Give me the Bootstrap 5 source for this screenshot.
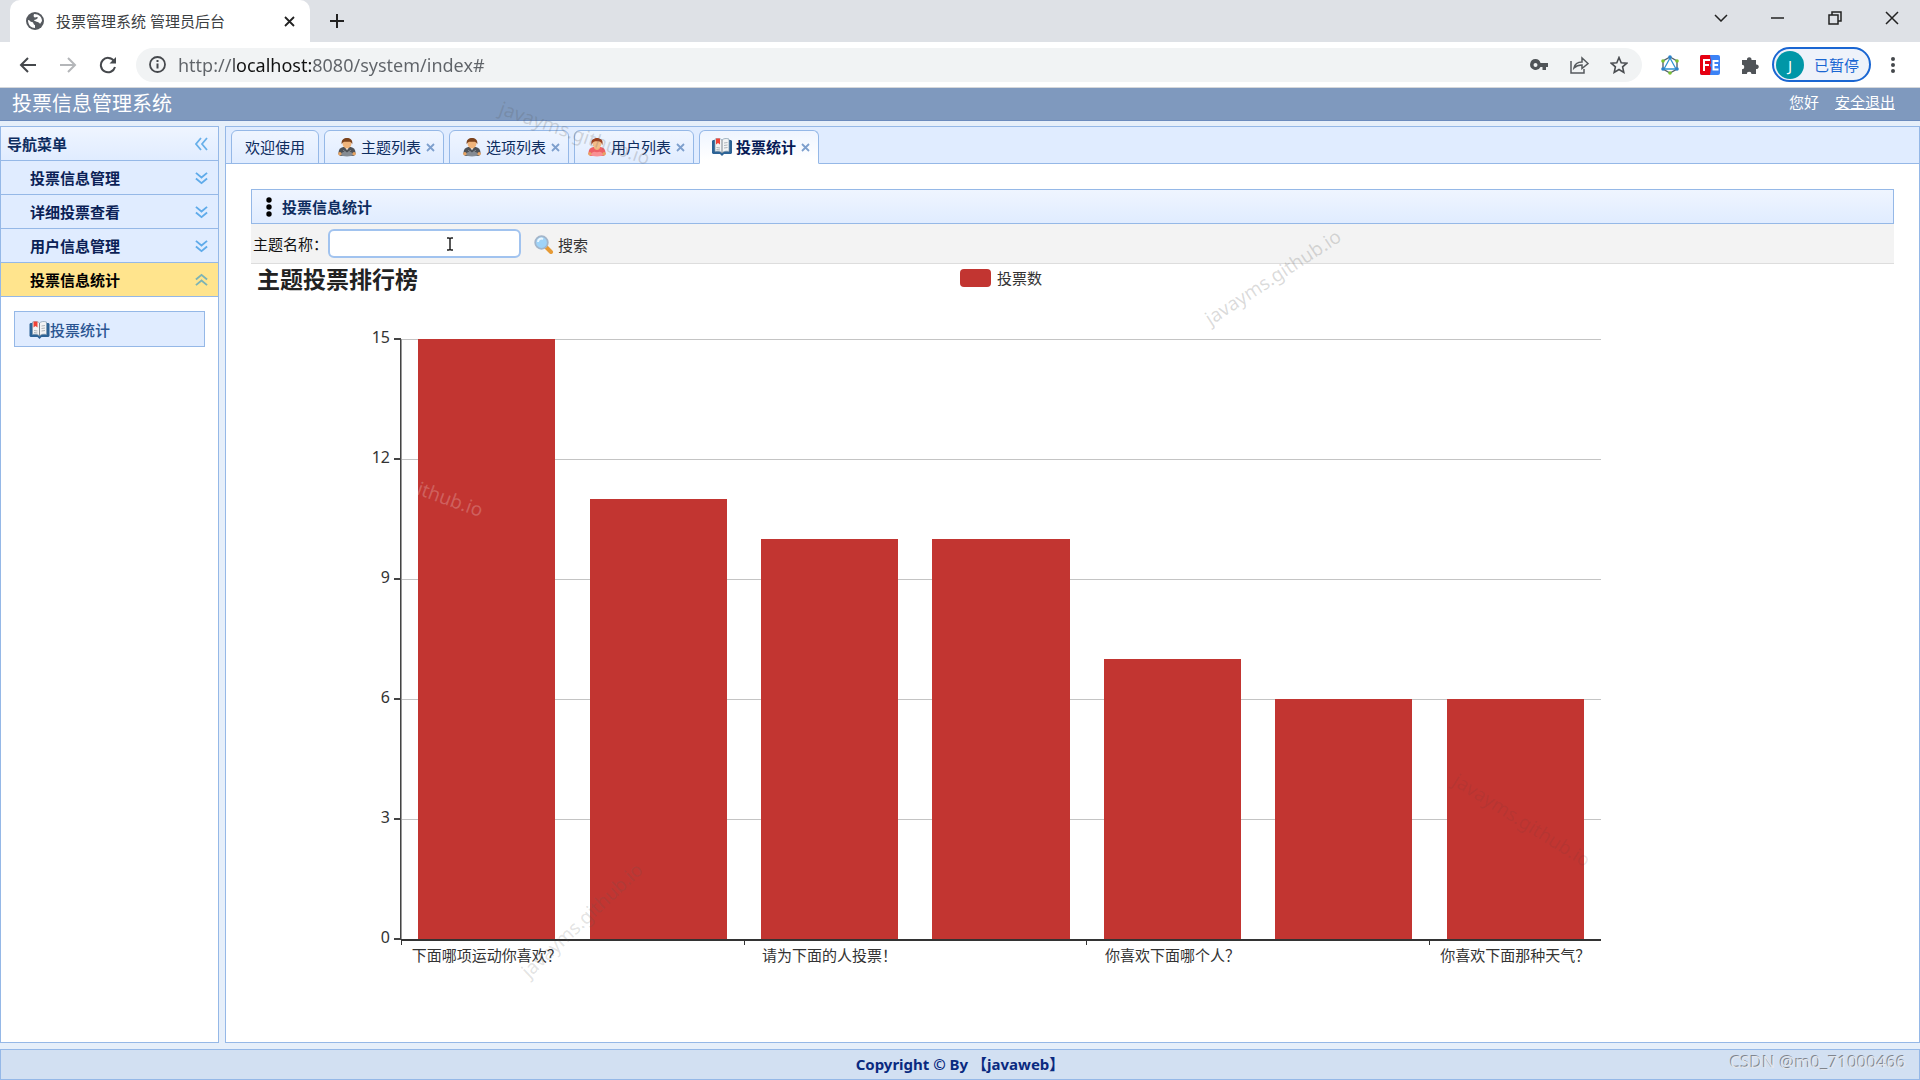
<!DOCTYPE html>
<html lang="zh-CN">
<head>
<meta charset="utf-8">
<meta name="viewport" content="width=device-width, initial-scale=1">
<title>投票管理系统 管理员后台</title>
<link href="https://cdn.jsdelivr.net/npm/bootstrap@5.3.0/dist/css/bootstrap.min.css" rel="stylesheet">
<style>
:root{--line:#95b8e7;--pale:#e0ecff;--navy:#0e2d5f;--bar:#c23531;}
body{font-family:"Noto Sans","Noto Sans CJK SC",sans-serif;font-size:15px;line-height:20px;color:#222;background:#e6effa;overflow-x:hidden}
button{font:inherit;color:inherit;background:none;border:0;padding:0}
svg{display:block;flex:none}
/* browser frame */
.strip{height:42px;background:#dee1e6;padding-left:10px}
.page-tab{width:300px;height:42px;background:#fff;border-radius:10px 10px 0 0;padding:0 14px 0 16px;color:#3c4043}
.page-tab .x-btn{width:12px}
.plus{width:54px}
.win{width:57px;height:36px;display:grid;place-items:center}
.toolbar{height:46px;background:#fff;border-bottom:1px solid #d5d7da;padding:0 7px 0 8px}
.tool{width:40px;height:34px;display:grid;place-items:center}
.tool.narrow{width:40px;margin-left:2px}
.omni{height:34px;border-radius:17px;background:#f1f3f4;margin:0 8px;padding:0 3px 0 13px}
.omni input{font-size:18px;line-height:24px;border:0;outline:0;padding:0;margin-left:12px;color:transparent;caret-color:#000;background:linear-gradient(90deg,#5f6368 56px,#111 56px,#111 133px,#5f6368 133px);-webkit-background-clip:text;background-clip:text}
.profile{width:99px;height:35px;border:2px solid #1a66d2;border-radius:18px;background:#eef2fa;color:#1a66d2;padding-left:2px;margin-left:2px}
.avatar{width:28px;height:28px;border-radius:50%;background:#0097a7;color:#fff;line-height:28px;text-align:center;margin-right:10px}
/* application */
.app-head{height:33px;background:#7f99be;border-bottom:1px solid #6c8bbd;color:#fff;padding:0 25px 0 12px}
.app-head h1{font-size:20px;line-height:30px;margin:0;font-weight:400}
.app-head a{color:#fff}
.frame{padding:5px 0 6px;gap:6px}
.side{width:219px;border:1px solid var(--line);background:#fff}
.side h2{font-size:15px;line-height:20px;font-weight:700;margin:0}
.side-title{height:34px;padding:0 10px 0 6px;background:linear-gradient(#eff5ff,#e0ecff);border-bottom:1px solid var(--line);color:var(--navy)}
.fold{height:34px;width:100%;padding:0 10px 0 29px;background:var(--pale);border-bottom:1px solid var(--line);color:#0b1f56;font-weight:700}
.fold.open{background:#ffe48d;color:#000}
.sub{margin:14px 13px;height:36px;border:1px solid var(--line);background:var(--pale);padding:2px 0 0 14px;color:#2b5592;font-weight:500;text-decoration:none}
.main{border:1px solid var(--line);background:#fff;min-width:0}
.tabs{height:37px;background:var(--pale);border-bottom:1px solid var(--line);padding:3px 5px 0;gap:5px;flex-wrap:nowrap}
.tabs .item{height:34px;border:1px solid var(--line);border-radius:6px 6px 0 0;background:linear-gradient(#eff5ff,#e0ecff);padding:0 8px 0 12px;color:var(--navy)}
.tabs .plain{padding:0 13px}
.tabs .item.on{background:linear-gradient(#eff5ff,#fff 90%);border-bottom-color:#fff;font-weight:700;color:#061a55}
.tabs a{color:inherit;text-decoration:none;white-space:nowrap}
.tabs .item>svg{margin-right:4px}
.tabs .item button svg{margin-left:5px}
.work{padding:25px}
.work-title{height:35px;border:1px solid var(--line);background:linear-gradient(#eff5ff,#e0ecff);padding-left:12px;color:var(--navy)}
.work-title h2{font-size:15px;line-height:20px;font-weight:700;margin:0 0 0 10px}
.query{height:40px;background:#f3f3f3;border-bottom:1px solid #ddd;padding:0 3px 0 2px;color:#111}
.query input{width:193px;height:29px;border:2px solid #a1c3ef;border-radius:6px;outline:0;padding:0 6px;background:#fff}
.query button{margin-left:13px;padding-top:2px;color:#333}
/* chart */
.chart{max-width:1500px}
.chart-head{height:75px;padding:1px 6px}
.chart-head h3{font-size:23px;line-height:28px;font-weight:700;margin:0;color:#222;flex:1 1 0}
.legend{padding-top:3px;color:#333}
.swatch{width:31px;height:18px;border-radius:4px;background:var(--bar);margin-right:6px}
.plot-row{padding:0 10%}
.scale{position:absolute;right:100%;top:-12px;bottom:-12px;font-size:16px;line-height:24px;color:#333}
.scale span{white-space:nowrap;margin-bottom:3px;line-height:21px}
.scale i{width:7px;height:2px;background:#444;margin-left:4px}
.plot{position:relative;height:600px;background:linear-gradient(#c4c4c4 1px,transparent 1px) 0 0/100% 20%;box-shadow:-1px 0 0 #444,inset 1px 0 0 #999}
.slot{flex:1 1 0;min-width:0}
.column{width:80%;background:var(--bar)}
.ticks{height:6px;border-top:2px solid #333}
.ticks .slot:nth-child(odd){border-left:1px solid #333}
.names{white-space:nowrap;line-height:20px;color:#333}
.foot{height:31px;background:#d2e0f2;border:1px solid var(--line);color:#0a2a80;font-weight:700;text-align:center;line-height:29px}
.csdn{position:absolute;right:14px;bottom:6px;font-size:17px;line-height:24px;color:#e2e6ec;text-shadow:-1px -1px 0 #80858e}
.stamp{position:absolute;font-size:19px;line-height:24px;white-space:nowrap;pointer-events:none;color:rgba(90,90,90,.22)}
.st1{left:496px;top:121px;transform:rotate(19deg)}
.st2{left:1194px;top:265px;transform:rotate(-33deg)}
.st3{left:416px;top:487px;transform:rotate(20deg);color:rgba(255,255,255,.22)}
.st4{left:503px;top:908px;transform:rotate(-43deg);color:rgba(90,90,90,.18)}
.st5{left:1443px;top:808px;transform:rotate(32deg);color:rgba(90,60,60,.12)}
.caret{position:absolute;left:446px;top:237px}
</style>
<script src="https://cdn.jsdelivr.net/npm/bootstrap@5.3.0/dist/js/bootstrap.bundle.min.js"></script>
</head>
<body class="d-flex flex-column min-vh-100 position-relative">
<svg width="0" height="0" class="position-absolute">
<defs>
<symbol id="down" viewBox="0 0 14 14"><path d="M1 1.500 7 6.500l6-5M1 7.500l6 5 6-5" fill="none" stroke="#5fabea" stroke-width="2"/></symbol>
<symbol id="close" viewBox="0 0 9 9"><path d="m1 1 7 7M8 1 1 8" stroke="#7d9fcd" stroke-width="1.800"/></symbol>
<symbol id="man" viewBox="0 0 20 20"><path d="M1 16c0-4 2-6 5-6.500h8c3 .5 5 2.500 5 6.500 0 2-2 3-4 3H5c-2 0-4-1-4-3z" fill="#4d5157"/><path d="m8 10 2 3 2-3z" fill="#f5efe6"/><path d="M3 18c2-4 4-4 7-3 3-1 5-1 7 3-2 2-12 2-14 0z" fill="#858b93"/><path d="M6 13l3 2M14 13l-3 2" stroke="#8e949b"/><circle cx="2.500" cy="16.500" r="1.800" fill="#e8a462"/><circle cx="17.500" cy="16.500" r="1.800" fill="#e8a462"/><ellipse cx="10" cy="6" rx="4.700" ry="5" fill="#f0b47b"/><path d="M4.500 6.500C3.500 2 7 0 10 0s6.500 2 5.500 6.500c-1-3-3-2.500-5.500-2.500S5.500 3.500 4.500 6.500z" fill="#7b421c"/></symbol>
<symbol id="woman" viewBox="0 0 20 20"><path d="M1 16c0-4 2-6 5-6.500h8c3 .5 5 2.500 5 6.500 0 2-2 3-4 3H5c-2 0-4-1-4-3z" fill="#ee5f66"/><path d="M3 18c2-4 4-4 7-3 3-1 5-1 7 3-2 2-12 2-14 0z" fill="#f98f93"/><path d="M6.500 9.500c1 4 6 4 7 0z" fill="#f0b47b"/><circle cx="2.500" cy="16.500" r="1.800" fill="#e8a462"/><circle cx="17.500" cy="16.500" r="1.800" fill="#e8a462"/><ellipse cx="10" cy="6" rx="4.700" ry="5" fill="#f3bd88"/><path d="M4.500 7.500C2.500 2 7 0 10 0s7.500 2 5.500 7.500c-1-4-3-4-5.500-4S5.500 3.500 4.500 7.500z" fill="#9c3f1d"/></symbol>
<symbol id="book" viewBox="0 0 20 18"><path d="M1 2h18l1 1v12l-1 1h-7l-2 2-2-2H1l-1-1V3z" fill="#2c6396"/><path d="M3 1c3-1 5.500-.5 7 1 1.500-1.500 4-2 7-1v12.500c-3-.7-5.500-.3-7 1.500-1.500-1.800-4-2.200-7-1.500z" fill="#f2f4f5" stroke="#7f98ac" stroke-width=".7"/><path d="M10 2v13" stroke="#7c8790"/><path d="M4 .5h4v6L6 5 4 6.500z" fill="#ef4237"/><path d="M12 5l3.500-.5M12 7.500l3.500-.5M12 10l3.500-.5M4.500 9.500l3.500.5M4.500 11.500l3.500.5" stroke="#afb5ba"/></symbol>
</defs></svg>

<header>
<div class="strip d-flex align-items-center">
  <div class="page-tab d-flex align-items-center">
    <svg width="18" height="18" viewBox="0 0 18 18"><circle cx="9" cy="9" r="9" fill="#565a5f"/><path d="M2 8c2 0 2 2 4 2s1 3 3 3v3c-4 0-7-3-7-8zM8 2c-1 3 0 4 3 3 2 0 0 3-3 3 0 2 5 1 6 4l2-3c0-4-3-7-8-7z" fill="#fff"/></svg>
    <span class="ms-2 ps-1 flex-grow-1">投票管理系统 管理员后台</span>
    <button class="x-btn" aria-label="关闭标签页"><svg width="11" height="11" viewBox="0 0 11 11"><path d="m1 1 9 9M10 1l-9 9" stroke="#222" stroke-width="1.800"/></svg></button>
  </div>
  <button class="plus d-grid justify-content-center" aria-label="新标签页"><svg width="16" height="16" viewBox="0 0 16 16"><path d="M8 1v14M1 8h14" stroke="#222" stroke-width="2"/></svg></button>
  <div class="ms-auto d-flex align-self-start">
    <button class="win" aria-label="搜索标签页"><svg width="14" height="8" viewBox="0 0 14 8"><path d="m1 1 6 6 6-6" fill="none" stroke="#222" stroke-width="1.500"/></svg></button>
    <button class="win" aria-label="最小化"><svg width="13" height="2"><path d="M0 1h13" stroke="#222" stroke-width="1.500"/></svg></button>
    <button class="win" aria-label="还原"><svg width="14" height="14" viewBox="0 0 14 14"><path d="M1 4h9v9H1zM4 4V1h9v9h-3" fill="none" stroke="#222" stroke-width="1.500"/></svg></button>
    <button class="win" aria-label="关闭"><svg width="14" height="14" viewBox="0 0 14 14"><path d="m1 1 12 12M13 1 1 13" stroke="#222" stroke-width="1.500"/></svg></button>
  </div>
</div>
<div class="toolbar d-flex align-items-center">
  <button class="tool" aria-label="后退"><svg width="18" height="16" viewBox="0 0 18 16"><path d="M17 8H2M9 1 2 8l7 7" fill="none" stroke="#45484c" stroke-width="2"/></svg></button>
  <button class="tool" aria-label="前进"><svg width="18" height="16" viewBox="0 0 18 16"><path d="M1 8h15M9 1l7 7-7 7" fill="none" stroke="#b4b6b9" stroke-width="2"/></svg></button>
  <button class="tool" aria-label="刷新"><svg width="18" height="18" viewBox="0 0 18 18"><path d="M15 5a7.200 7.200 0 1 0 1 6" fill="none" stroke="#45484c" stroke-width="2"/><path d="M17 1v6.500h-6.500z" fill="#45484c"/></svg></button>
  <div class="omni d-flex align-items-center flex-grow-1">
    <svg width="17" height="17" viewBox="0 0 17 17"><circle cx="8.500" cy="8.500" r="7.500" fill="none" stroke="#45484c" stroke-width="1.800"/><path d="M8.500 7.500v5M8.500 4v2" stroke="#45484c" stroke-width="2"/></svg>
    <input class="flex-grow-1" type="text" aria-label="地址" value="http://localhost:8080/system/index#">
    <button class="tool" aria-label="密码"><svg width="18" height="12" viewBox="0 0 18 12"><path fill-rule="evenodd" d="M5.500 0a5.500 5.500 0 0 1 5 4H18v4h-2v3h-3.500V8h-2a5.500 5.500 0 1 1-5-8zm0 4a2 2 0 1 0 0 4 2 2 0 0 0 0-4z" fill="#505458"/></svg></button>
    <button class="tool" aria-label="分享"><svg width="20" height="18" viewBox="0 0 20 18"><path d="M2 5v12h13v-4M5 12c1-5 4-6 8-6V2l6 5.500-6 5V9c-3 0-5 0-8 3z" fill="none" stroke="#55595d" stroke-width="1.500"/></svg></button>
    <button class="tool" aria-label="收藏"><svg width="18" height="18" viewBox="0 0 18 18"><path d="m9 1.500 2.200 5.200 5.600.5-4.200 3.700 1.200 5.500L9 13.500l-4.800 2.900 1.200-5.500L1.200 7.200l5.600-.5z" fill="none" stroke="#4a4d51" stroke-width="1.600"/></svg></button>
  </div>
  <button class="tool" aria-label="扩展一"><svg width="18" height="20" viewBox="0 0 18 20"><path d="M9 2 16 6v8l-7 4-7-4V6z" fill="none" stroke="#54646f" stroke-width="1.400"/><path d="m9 3 6 11H3z" fill="none" stroke="#2f93d3" stroke-width="1.300"/><g fill="#2a82cb"><circle cx="9" cy="2" r="1.800"/><circle cx="2" cy="14" r="1.800"/><circle cx="16" cy="14" r="1.800"/></g><g fill="#79c231"><circle cx="2" cy="6" r="1.800"/><circle cx="16" cy="6" r="1.800"/><circle cx="9" cy="18" r="1.800"/></g></svg></button>
  <button class="tool" aria-label="扩展二"><svg width="20" height="20" viewBox="0 0 20 20"><rect width="20" height="20" rx="2" fill="#3c83f6"/><path d="M2 0h8l1 8-1 2 1 3-1 7H2a2 2 0 0 1-2-2V2a2 2 0 0 1 2-2z" fill="#e60012"/><path d="M4 16V5h6M4 10h5M18.500 6h-5v8.500h5M13.500 10h4.500" fill="none" stroke="#fff" stroke-width="2"/></svg></button>
  <button class="tool" aria-label="扩展程序"><svg width="18" height="18" viewBox="0 0 18 18"><path d="M1 4h5a2.300 2.300 0 1 1 4.500 0H15v4.500a2.300 2.300 0 1 1 0 4.500v5h-4.500a2.300 2.300 0 0 0-4.700 0H1v-4.700a2.300 2.300 0 0 0 0-4.600z" fill="#505458"/></svg></button>
  <button class="profile d-flex align-items-center"><span class="avatar">J</span>已暂停</button>
  <button class="tool narrow" aria-label="菜单"><svg width="4" height="18"><g fill="#45484c"><circle cx="2" cy="3" r="2"/><circle cx="2" cy="9" r="2"/><circle cx="2" cy="15" r="2"/></g></svg></button>
</div>
</header>

<div class="app-head d-flex justify-content-between align-items-center">
  <h1>投票信息管理系统</h1>
  <div class="pb-1"><span class="me-3">您好</span><a href="#">安全退出</a></div>
</div>

<div class="frame d-flex flex-grow-1">
  <nav class="side flex-shrink-0">
    <div class="side-title d-flex align-items-center justify-content-between"><h2>导航菜单</h2><button aria-label="折叠菜单"><svg width="13" height="14" viewBox="0 0 13 14"><path d="M6 1 1 7l5 6M12 1 7 7l5 6" fill="none" stroke="#68b0ea" stroke-width="1.800"/></svg></button></div>
    <button class="fold d-flex align-items-center justify-content-between">投票信息管理<svg width="13" height="14"><use href="#down"/></svg></button>
    <button class="fold d-flex align-items-center justify-content-between">详细投票查看<svg width="13" height="14"><use href="#down"/></svg></button>
    <button class="fold d-flex align-items-center justify-content-between">用户信息管理<svg width="13" height="14"><use href="#down"/></svg></button>
    <button class="fold open d-flex align-items-center justify-content-between" aria-expanded="true">投票信息统计<svg width="13" height="14" viewBox="0 0 14 14"><path d="m1 6.500 6-5 6 5M1 12.500l6-5 6 5" fill="none" stroke="#7cb3b5" stroke-width="2"/></svg></button>
    <a class="sub d-flex align-items-center" href="#"><svg width="21" height="18"><use href="#book"/></svg>投票统计</a>
  </nav>
  <main class="main flex-grow-1">
    <ul class="tabs nav">
      <li class="item plain d-flex align-items-center"><a href="#">欢迎使用</a></li>
      <li class="item d-flex align-items-center"><svg width="20" height="19"><use href="#man"/></svg><a href="#">主题列表</a><button aria-label="关闭主题列表"><svg width="9" height="9"><use href="#close"/></svg></button></li>
      <li class="item d-flex align-items-center"><svg width="20" height="19"><use href="#man"/></svg><a href="#">选项列表</a><button aria-label="关闭选项列表"><svg width="9" height="9"><use href="#close"/></svg></button></li>
      <li class="item d-flex align-items-center"><svg width="20" height="19"><use href="#woman"/></svg><a href="#">用户列表</a><button aria-label="关闭用户列表"><svg width="9" height="9"><use href="#close"/></svg></button></li>
      <li class="item on d-flex align-items-center"><svg width="20" height="18"><use href="#book"/></svg><a href="#">投票统计</a><button aria-label="关闭投票统计"><svg width="9" height="9"><use href="#close"/></svg></button></li>
    </ul>
    <section class="work">
      <div class="work-title d-flex align-items-center"><svg width="8" height="20"><circle cx="5" cy="3" r="2.700"/><circle cx="5" cy="10" r="2.700"/><circle cx="5" cy="17" r="2.700"/></svg><h2>投票信息统计</h2></div>
      <form class="query d-flex align-items-center">
        <label for="topic">主题名称：</label><input id="topic" type="text">
        <button type="button" class="d-flex align-items-center"><svg class="me-1" width="20" height="19" viewBox="0 0 20 19"><path d="m12 12 5 5" stroke="#e69a35" stroke-width="4" stroke-linecap="round"/><circle cx="7.500" cy="7.500" r="6.300" fill="#9fd3f8" stroke="#a3b5ca" stroke-width="1.800"/><path d="M4 7c0-3 3-4 5-3" fill="none" stroke="#eaf7ff" stroke-width="2"/></svg>搜索</button>
      </form>
      <div class="chart">
        <div class="chart-head d-flex align-items-start">
          <h3>主题投票排行榜</h3>
          <div class="legend d-flex align-items-center"><span class="swatch"></span>投票数</div>
          <div class="flex-grow-1" style="flex-basis:0"></div>
        </div>
        <div class="plot-row">
          <div class="plot d-flex">
            <div class="scale d-flex flex-column justify-content-between">
              <div class="d-flex align-items-center justify-content-end"><span>15</span><i></i></div>
              <div class="d-flex align-items-center justify-content-end"><span>12</span><i></i></div>
              <div class="d-flex align-items-center justify-content-end"><span>9</span><i></i></div>
              <div class="d-flex align-items-center justify-content-end"><span>6</span><i></i></div>
              <div class="d-flex align-items-center justify-content-end"><span>3</span><i></i></div>
              <div class="d-flex align-items-center justify-content-end"><span>0</span><i></i></div>
            </div>
            <div class="slot d-flex align-items-end justify-content-center"><div class="column" style="height:100%"></div></div>
            <div class="slot d-flex align-items-end justify-content-center"><div class="column" style="height:73.33%"></div></div>
            <div class="slot d-flex align-items-end justify-content-center"><div class="column" style="height:66.67%"></div></div>
            <div class="slot d-flex align-items-end justify-content-center"><div class="column" style="height:66.67%"></div></div>
            <div class="slot d-flex align-items-end justify-content-center"><div class="column" style="height:46.67%"></div></div>
            <div class="slot d-flex align-items-end justify-content-center"><div class="column" style="height:40%"></div></div>
            <div class="slot d-flex align-items-end justify-content-center"><div class="column" style="height:40%"></div></div>
          </div>
          <div class="ticks d-flex"><i class="slot"></i><i class="slot"></i><i class="slot"></i><i class="slot"></i><i class="slot"></i><i class="slot"></i><i class="slot"></i></div>
          <div class="names d-flex text-center"><span class="slot">下面哪项运动你喜欢？</span><span class="slot"></span><span class="slot">请为下面的人投票！</span><span class="slot"></span><span class="slot">你喜欢下面哪个人？</span><span class="slot"></span><span class="slot">你喜欢下面那种天气？</span></div>
        </div>
      </div>
    </section>
  </main>
</div>
<footer class="foot">Copyright © By 【javaweb】</footer>

<span class="csdn">CSDN @m0_71000466</span>
<span class="stamp st1">javayms.github.io</span>
<span class="stamp st2">javayms.github.io</span>
<span class="stamp st3">ithub.io</span>
<span class="stamp st4">javayms.github.io</span>
<span class="stamp st5">javayms.github.io</span>
<svg class="caret" width="8" height="14" viewBox="0 0 8 14"><path d="M1 1h2l1 1 1-1h2M4 2v10M1 13h2l1-1 1 1h2" fill="none" stroke="#222" stroke-width="1.500"/></svg>
</body>
</html>
